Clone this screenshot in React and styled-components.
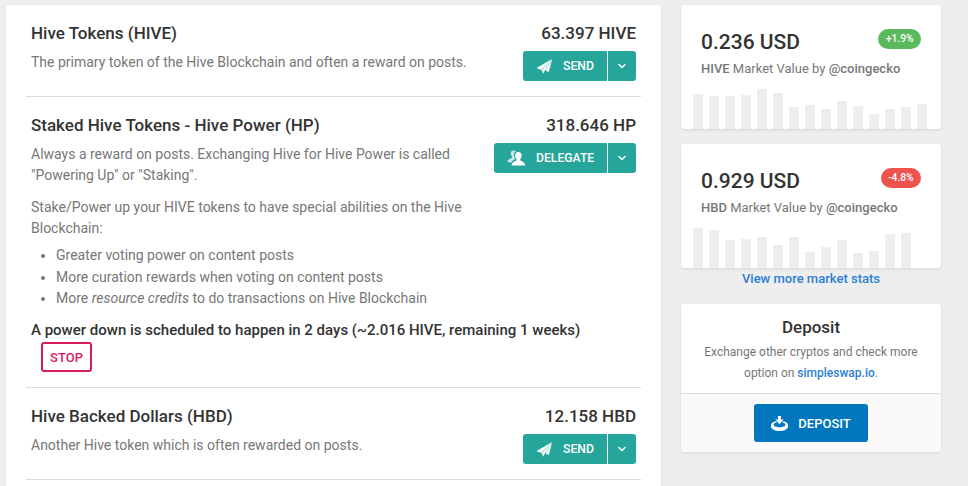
import styled, { createGlobalStyle } from 'styled-components';

const GlobalStyle = createGlobalStyle`
  html, body {
    margin: 0;
    height: 100%;
    overflow: hidden;
    background: #eeeeee;
    font-family: Roboto, "Liberation Sans", sans-serif;
  }
`;

const Page = styled.div`
  display: flex;
  align-items: flex-start;
  gap: 20px;
  padding: 5px 0 0 6px;
`;

const MainCard = styled.div`
  width: 655px;
  height: 500px;
  flex-shrink: 0;
  box-sizing: border-box;
  padding: 0 20px;
  background: #fff;
  border-radius: 4px;
  box-shadow: 0 1px 3px rgba(0, 0, 0, 0.08);
`;

const TokenRow = styled.div`
  display: flex;
  justify-content: space-between;
  height: ${(props) => props.$height}px;
  box-sizing: border-box;
  padding: 17px 5px 0;
  border-bottom: 1px solid #dddddd;
`;

const TokenInfo = styled.div`
  width: 440px;
  flex-shrink: 0;
`;

const TokenTitle = styled.div`
  font-size: 17px;
  font-weight: 500;
  line-height: 22px;
  color: #333;
  margin-bottom: 8px;
`;

const Text = styled.div`
  font-size: 14px;
  line-height: 21px;
  color: #777;
  margin-bottom: ${(props) => props.$mb || 0}px;
`;

const BulletList = styled.ul`
  margin: 6px 0 10.5px;
  padding: 0 0 0 25px;
  font-size: 14px;
  line-height: 21.5px;
  color: #777;
`;

const Warning = styled.div`
  width: 590px;
  font-size: 15px;
  font-weight: 500;
  line-height: 20px;
  color: #333;
`;

const StopButton = styled.button`
  display: block;
  width: 51px;
  height: 30px;
  margin: 2px 0 0 10px;
  padding: 0;
  box-sizing: border-box;
  border: 2px solid #d81b60;
  border-radius: 3px;
  background: #fff;
  color: #d81b60;
  font: 500 13px Roboto, sans-serif;
`;

const TokenSide = styled.div`
  display: flex;
  flex-direction: column;
  align-items: flex-end;
`;

const Balance = styled.div`
  font-size: 17px;
  font-weight: 500;
  line-height: 22px;
  color: #333;
  margin-bottom: 7px;
`;

const SplitButton = styled.div`
  display: flex;
  height: 30px;
  border-radius: 3px;
  overflow: hidden;
  background: #26a69a;
  color: #fff;
`;

const ActionPart = styled.div`
  display: flex;
  align-items: center;
  gap: 10px;
  width: ${(props) => props.$width}px;
  box-sizing: border-box;
  padding-left: 13px;
  font-size: 12.2px;
  font-weight: 500;
  border-right: 1px solid #fff;
`;

const CaretPart = styled.div`
  display: flex;
  align-items: center;
  justify-content: center;
  width: 28px;
`;

const Sidebar = styled.div`
  display: flex;
  flex-direction: column;
  width: 260px;
  flex-shrink: 0;
`;

const StatCard = styled.div`
  display: flex;
  flex-direction: column;
  height: 124px;
  box-sizing: border-box;
  padding: 26px 20px 0;
  background: #fff;
  border-radius: 4px;
  box-shadow: 0 1px 3px rgba(0, 0, 0, 0.1);
  margin-bottom: ${(props) => props.$mb || 0}px;
`;

const StatHeader = styled.div`
  display: flex;
  justify-content: space-between;
  align-items: flex-start;
`;

const StatValue = styled.div`
  font-size: 21px;
  font-weight: 500;
  line-height: 22px;
  color: #333;
`;

const Badge = styled.div`
  height: 20px;
  padding: 0 7.5px;
  margin-top: -2px;
  border-radius: 10px;
  background: ${(props) => props.$color};
  color: #fff;
  font-size: 10.2px;
  font-weight: 500;
  line-height: 20px;
`;

const StatLabel = styled.div`
  margin-top: 7px;
  font-size: 13px;
  line-height: 18px;
  color: #777;

  b {
    font-weight: 500;
  }
`;

const Chart = styled.div`
  display: flex;
  align-items: flex-end;
  gap: 6px;
  margin: auto -8px 0;
  height: 40px;
`;

const ChartBar = styled.div`
  width: 10px;
  background: #eeeeee;
`;

const MoreLink = styled.a`
  display: block;
  margin: 3px 0 17px;
  text-align: center;
  font-size: 13px;
  font-weight: 500;
  line-height: 16px;
  color: #2a7fd4;
`;

const DepositCard = styled.div`
  background: #fff;
  border-radius: 4px;
  box-shadow: 0 1px 3px rgba(0, 0, 0, 0.1);
  overflow: hidden;
`;

const DepositBody = styled.div`
  height: 90px;
  box-sizing: border-box;
  padding-top: 13px;
  text-align: center;
  border-bottom: 1px solid #dddddd;
`;

const DepositTitle = styled.div`
  font-size: 17px;
  font-weight: 500;
  line-height: 20px;
  color: #333;
  margin-bottom: 5px;
`;

const DepositText = styled.div`
  font-size: 12px;
  line-height: 21px;
  color: #777;

  a {
    color: #2a7fd4;
    font-weight: 500;
  }
`;

const DepositFooter = styled.div`
  display: flex;
  justify-content: center;
  height: 58px;
  box-sizing: border-box;
  padding-top: 10px;
  background: #fafafa;
`;

const DepositButton = styled.div`
  display: flex;
  align-items: center;
  justify-content: center;
  gap: 10px;
  width: 114px;
  height: 38px;
  border-radius: 3px;
  background: #0277bd;
  color: #fff;
  font-size: 13px;
  font-weight: 500;
`;

const PlaneIcon = () => (
  <svg width="17" height="15" viewBox="0 0 16 15" fill="#fff">
    <path d="M15.700 0 L0 9 L4.600 10.900 Z" />
    <path d="M15.700 0 L5.200 11.200 L6.600 14.700 L8.200 11.800 Z" />
    <path d="M15.700 0 L9 11.500 L12.200 13 Z" />
  </svg>
);

const DelegateIcon = () => (
  <svg width="19" height="17" viewBox="0 0 20 18" fill="#fff">
    <path opacity="0.75" d="M7 .5c-2 0-3 1.400-3 3.200 0 1.200.5 2.400 1.200 3.100v1.400C3.500 8.900 1 10 0 11.700c1 1 2.600 1.600 4.200 1.800.8-1.500 2.200-2.700 4-3.400V8.300C7.300 7.300 7 5.800 7.300 4.200 7.600 2.800 8.600 1.700 9.700 1.300 9 .8 8.100.5 7 .5z" />
    <path d="M12 2c-2.200 0-3.500 1.700-3.500 3.900 0 1.500.7 2.900 1.500 3.600v1.600c-2.400.8-4.400 2-5 3.900v1.500h14v-1.500c-.6-1.900-2.600-3.100-5-3.900V9.500c.8-.7 1.500-2.100 1.500-3.600C15.500 3.700 14.200 2 12 2z" />
  </svg>
);

const CaretIcon = () => (
  <svg width="10" height="6" viewBox="0 0 10 6" fill="none" stroke="#fff" strokeWidth="1.4">
    <path d="M1.500 1l3.500 3.500L8.500 1" />
  </svg>
);

const DepositIcon = () => (
  <svg width="17" height="15" viewBox="0 0 17 15" fill="#fff">
    <path d="M7 0h3v3.500h2.600L8.500 8.300 4.400 3.500H7z" />
    <path
      fillRule="evenodd"
      d="M5 5.200C2 5.800 0 7.200 0 9.200v1.300C0 13 3.800 15 8.500 15S17 13 17 10.500V9.200c0-2-2-3.400-5-4l-.9 1.100c2 .4 3.300 1.300 3.300 2.400 0 1.400-2.700 2.500-5.900 2.500S2.600 10.100 2.600 8.700c0-1.100 1.300-2 3.300-2.400z"
    />
  </svg>
);

const hiveBars = [35, 33, 33, 34, 40, 36, 22, 24, 20, 28, 23, 15, 20, 22, 25];
const hbdBars = [40, 38, 28, 29, 31, 23, 31, 16, 21, 28, 15, 17, 34, 35];

function TokenAction({ icon, label, width }) {
  return (
    <SplitButton>
      <ActionPart $width={width}>
        {icon}
        {label}
      </ActionPart>
      <CaretPart>
        <CaretIcon />
      </CaretPart>
    </SplitButton>
  );
}

function MarketCard({ value, change, color, coin, bars, mb }) {
  return (
    <StatCard $mb={mb}>
      <StatHeader>
        <StatValue>{value}</StatValue>
        <Badge $color={color}>{change}</Badge>
      </StatHeader>
      <StatLabel>
        <b>{coin}</b> Market Value by <b>@coingecko</b>
      </StatLabel>
      <Chart>
        {bars.map((height, i) => (
          <ChartBar key={i} style={{ height }} />
        ))}
      </Chart>
    </StatCard>
  );
}

export default function App() {
  return (
    <Page>
      <GlobalStyle />
      <MainCard>
        <TokenRow $height={92}>
          <TokenInfo>
            <TokenTitle>Hive Tokens (HIVE)</TokenTitle>
            <Text>The primary token of the Hive Blockchain and often a reward on posts.</Text>
          </TokenInfo>
          <TokenSide>
            <Balance>63.397 HIVE</Balance>
            <TokenAction icon={<PlaneIcon />} label="SEND" width={85} />
          </TokenSide>
        </TokenRow>
        <TokenRow $height={291}>
          <TokenInfo>
            <TokenTitle>Staked Hive Tokens - Hive Power (HP)</TokenTitle>
            <Text $mb={11}>
              Always a reward on posts. Exchanging Hive for Hive Power is called "Powering Up" or "Staking".
            </Text>
            <Text>Stake/Power up your HIVE tokens to have special abilities on the Hive Blockchain:</Text>
            <BulletList>
              <li>Greater voting power on content posts</li>
              <li>More curation rewards when voting on content posts</li>
              <li>
                More <i>resource credits</i> to do transactions on Hive Blockchain
              </li>
            </BulletList>
            <Warning>A power down is scheduled to happen in 2 days (~2.016 HIVE, remaining 1 weeks)</Warning>
            <StopButton>STOP</StopButton>
          </TokenInfo>
          <TokenSide>
            <Balance>318.646 HP</Balance>
            <TokenAction icon={<DelegateIcon />} label="DELEGATE" width={114} />
          </TokenSide>
        </TokenRow>
        <TokenRow $height={92}>
          <TokenInfo>
            <TokenTitle>Hive Backed Dollars (HBD)</TokenTitle>
            <Text>Another Hive token which is often rewarded on posts.</Text>
          </TokenInfo>
          <TokenSide>
            <Balance>12.158 HBD</Balance>
            <TokenAction icon={<PlaneIcon />} label="SEND" width={85} />
          </TokenSide>
        </TokenRow>
      </MainCard>
      <Sidebar>
        <MarketCard value="0.236 USD" change="+1.9%" color="#5cb85c" coin="HIVE" bars={hiveBars} mb={15} />
        <MarketCard value="0.929 USD" change="-4.8%" color="#ef5350" coin="HBD" bars={hbdBars} />
        <MoreLink>View more market stats</MoreLink>
        <DepositCard>
          <DepositBody>
            <DepositTitle>Deposit</DepositTitle>
            <DepositText>
              Exchange other cryptos and check more
              <br />
              option on <a>simpleswap.io</a>.
            </DepositText>
          </DepositBody>
          <DepositFooter>
            <DepositButton>
              <DepositIcon />
              DEPOSIT
            </DepositButton>
          </DepositFooter>
        </DepositCard>
      </Sidebar>
    </Page>
  );
}
